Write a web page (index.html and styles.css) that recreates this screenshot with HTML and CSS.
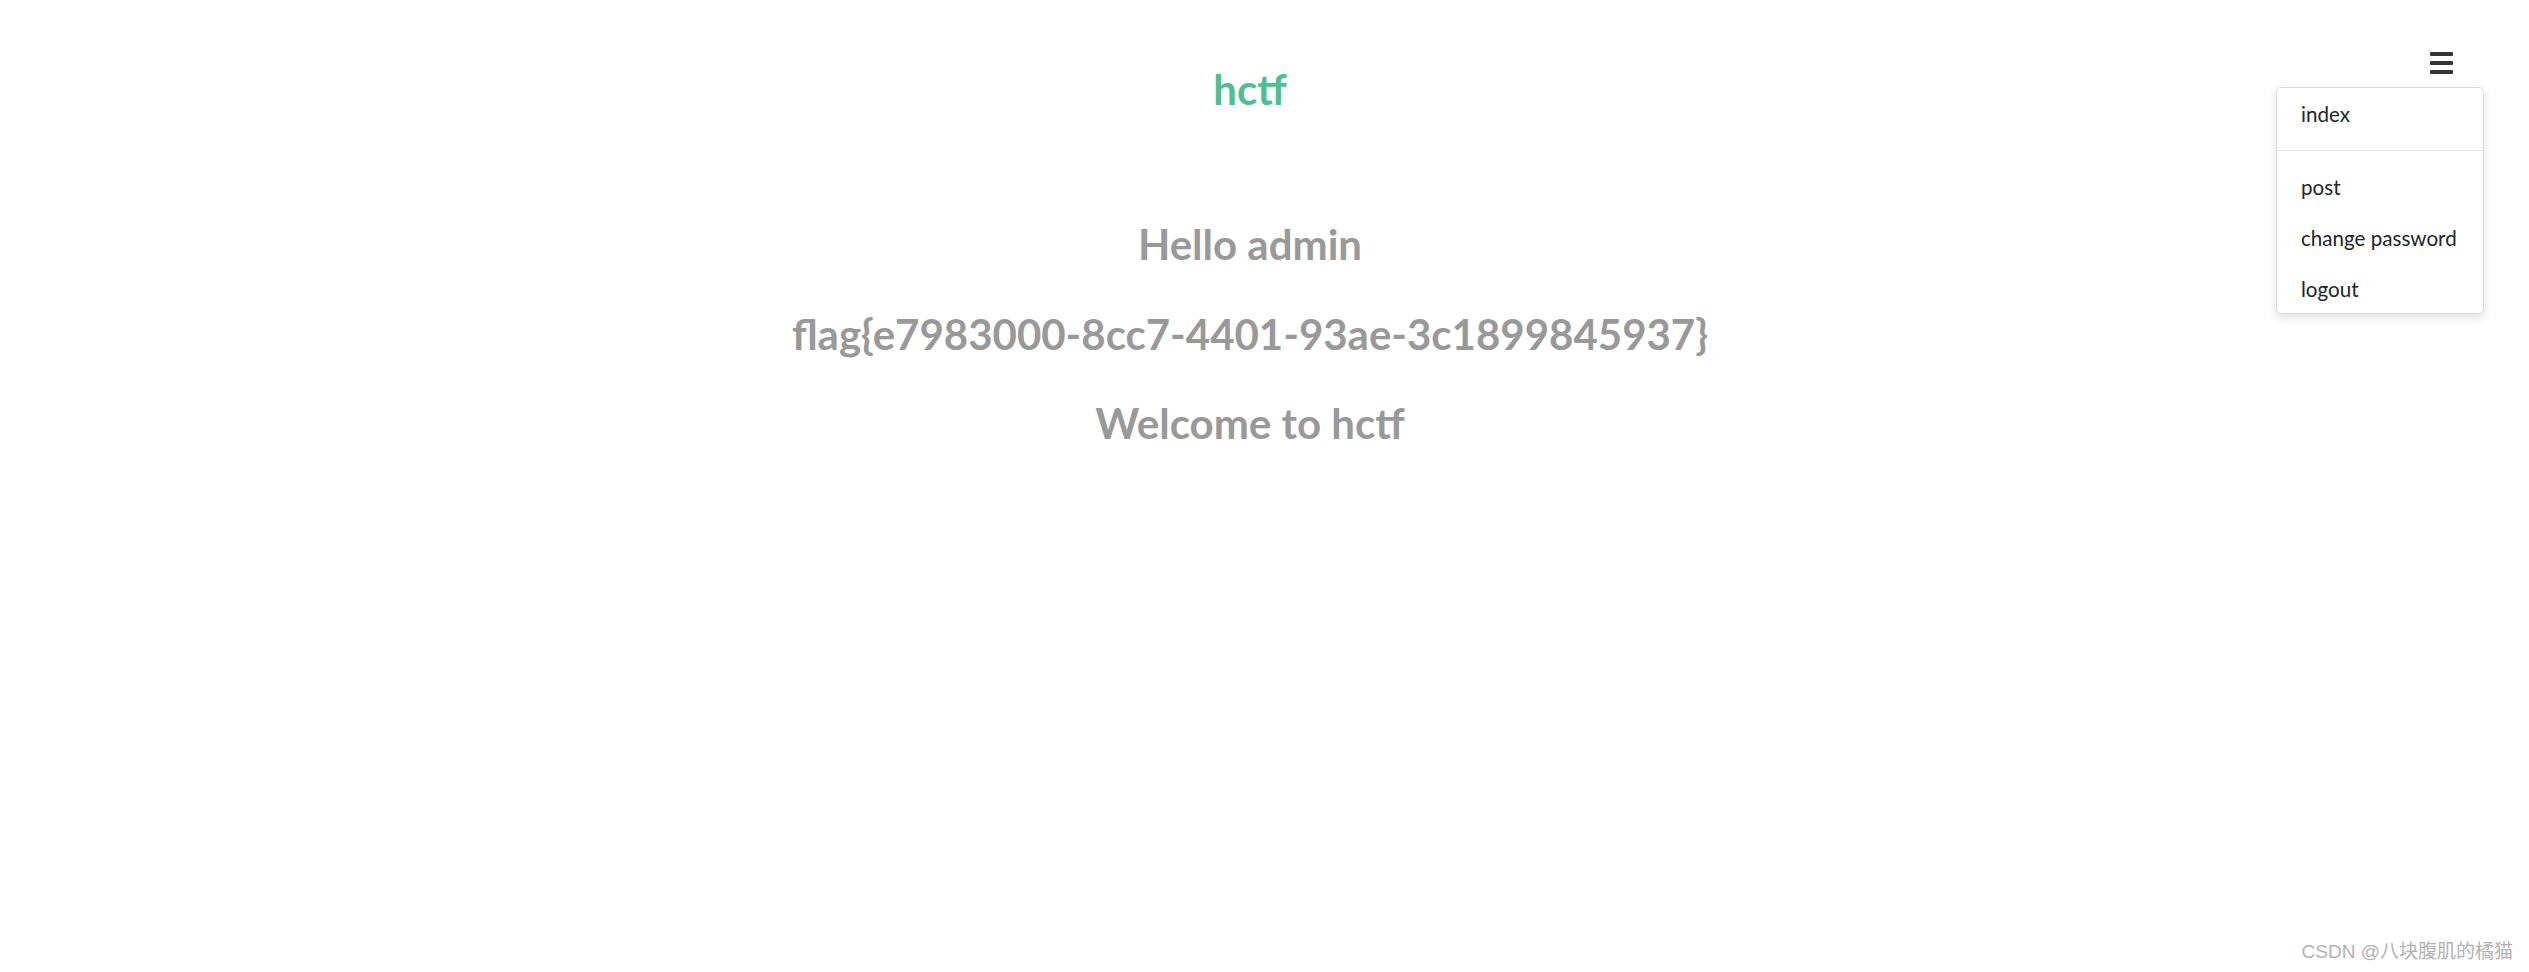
FILE: index.html
```html
<!DOCTYPE html>
<html lang="en">
<head>
<meta charset="utf-8">
<title>hctf</title>
<link rel="stylesheet" href="styles.css">
</head>
<body>
<div class="page">
  <header class="topbar">
    <div class="brand">hctf</div>
    <div class="menu-wrap">
      <button class="burger" aria-label="menu">
        <span></span><span></span><span></span>
      </button>
      <ul class="dropdown">
        <li class="item">index</li>
        <li class="divider"></li>
        <li class="item">post</li>
        <li class="item">change password</li>
        <li class="item">logout</li>
      </ul>
    </div>
  </header>
  <main class="content">
    <h2 class="line">Hello admin</h2>
    <h2 class="line">flag{e7983000-8cc7-4401-93ae-3c1899845937}</h2>
    <h2 class="line">Welcome to hctf</h2>
  </main>
</div>
<div class="watermark">CSDN @八块腹肌的橘猫</div>
</body>
</html>
```

FILE: styles.css
```css
html, body {
  margin: 0;
  padding: 0;
  background: #ffffff;
  width: 2529px;
  height: 972px;
  overflow: hidden;
  font-family: Lato, "Noto Sans", sans-serif;
}

.page {
  width: 2500px;
  position: relative;
}

.topbar {
  height: 130px;
  display: flex;
  justify-content: center;
  position: relative;
}

.brand {
  margin-top: 61px;
  font-size: 42px;
  line-height: 56px;
  font-weight: 700;
  color: #4fc08d;
}

.menu-wrap {
  position: absolute;
  top: 0;
  right: 0;
  width: 0;
  height: 0;
}

.burger {
  position: absolute;
  left: -70px;
  top: 52px;
  width: 23px;
  height: 22px;
  padding: 0;
  border: 0;
  background: transparent;
  display: flex;
  flex-direction: column;
  justify-content: space-between;
}

.burger span {
  display: block;
  height: 4px;
  width: 23px;
  background: #333333;
  border-radius: 1px;
}

.dropdown {
  position: absolute;
  left: -224px;
  top: 87px;
  width: 206px;
  margin: 0;
  padding: 1px 0 0;
  list-style: none;
  background: #ffffff;
  border: 1px solid #dcdcdc;
  border-radius: 5px;
  box-shadow: 0 4px 10px rgba(0, 0, 0, 0.12);
  box-sizing: content-box;
  height: 224px;
  overflow: hidden;
}

.item {
  height: 51px;
  line-height: 51px;
  padding: 0 24px;
  font-size: 20.6px;
  color: #212529;
  white-space: nowrap;
}

.divider {
  height: 1px;
  margin: 10px 0 11px;
  background: #e6e6e6;
}

.content {
  display: flex;
  flex-direction: column;
  align-items: center;
}

.line {
  margin: 0;
  height: 89.5px;
  line-height: 89.5px;
  font-size: 42px;
  font-weight: 700;
  color: #999999;
  white-space: nowrap;
}

.line:first-child {
  margin-top: 70px;
}

.watermark {
  position: absolute;
  right: 16px;
  bottom: 9px;
  font-family: "Liberation Sans", "Noto Sans CJK SC", sans-serif;
  font-size: 19px;
  color: #b2b2b2;
  text-shadow: 0 0 1px #ffffff;
}
```
